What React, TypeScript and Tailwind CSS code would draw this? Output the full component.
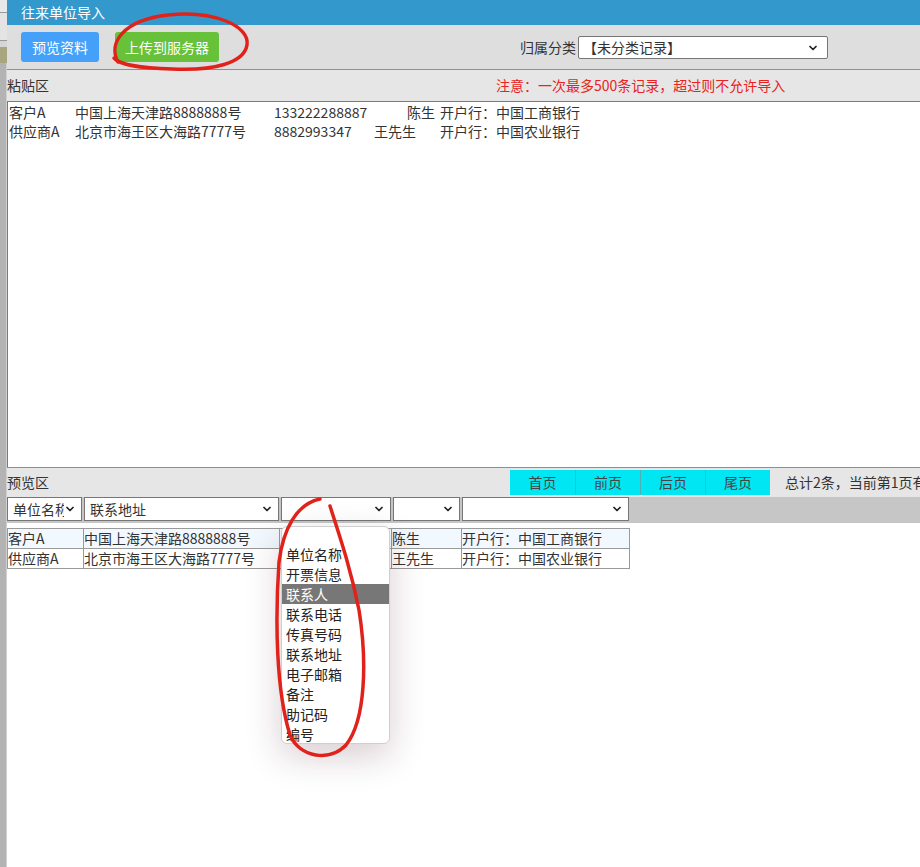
import React from 'react';
import { ChevronDown } from 'lucide-react';

const pasteRows = [
  { name: '客户A', addr: '中国上海天津路8888888号', phone: '133222288887', person: '陈生', personCls: 'w-[66px] pl-[33px]', bank: '开户行：中国工商银行' },
  { name: '供应商A', addr: '北京市海王区大海路7777号', phone: '8882993347', person: '王先生', personCls: 'w-[66px]', bank: '开户行：中国农业银行' },
];

const options = ['单位名称', '开票信息', '联系人', '联系电话', '传真号码', '联系地址', '电子邮箱', '备注', '助记码', '编号'];

function FakeSelect({ w, text }: { w: string; text?: string }) {
  return (
    <div className={`${w} h-[24px] shrink-0 bg-white border border-[#767676] flex items-center justify-between pl-[5px] pr-[5px] overflow-hidden`}>
      <span className="whitespace-nowrap overflow-hidden">{text}</span>
      <ChevronDown className="w-[12px] h-[12px] shrink-0 text-[#222]" strokeWidth={3.5} />
    </div>
  );
}

function App() {
  return (
    <div className="relative h-[867px] w-[920px] overflow-hidden flex bg-white text-[14px] text-[#333] font-['Noto_Sans_CJK_SC','Microsoft_YaHei',sans-serif]">
      {/* background window peeking out on the left */}
      <div className="w-[7px] shrink-0 flex flex-col bg-[#b3b3b3]">
        <div className="h-[13px] bg-[#e9e9e9] border-b border-[#999]" />
        <div className="h-[28px] bg-[#e4e4e4] border-b border-[#999]" />
        <div className="h-[6px] bg-[#d6d6d6]" />
        <div className="h-[16px] bg-[#a9a57f]" />
        <div className="flex-1 bg-[#b3b3b3] border-r border-[#d0d0d0]" />
      </div>

      <div className="flex-1 flex flex-col min-w-0">
        <div className="h-[25px] bg-[#3399cc] text-white flex items-center pl-[14px]">往来单位导入</div>

        <div className="h-[45px] bg-[#dedede] border-b border-[#8f8f8f] flex items-start pt-[7px] pl-[14px]">
          <button className="h-[30px] w-[78px] rounded-[3px] bg-[#45a0fa] text-white">预览资料</button>
          <button className="h-[30px] w-[104px] ml-[16px] rounded-[3px] bg-[#67c23a] text-white">上传到服务器</button>
          <div className="ml-[301px] mt-[4px] flex items-center">
            <span className="mr-[2px]">归属分类</span>
            <div className="w-[250px] h-[23px] bg-white border border-[#767676] rounded-[2px] flex items-center justify-between pl-[4px] pr-[8px]">
              <span>【未分类记录】</span>
              <ChevronDown className="w-[12px] h-[12px] text-[#222]" strokeWidth={3.5} />
            </div>
          </div>
        </div>

        <div className="h-[31px] bg-[#e6e6e6] flex items-center">
          <span>粘贴区</span>
          <span className="ml-[447px] text-[#e8231f]">注意：一次最多500条记录，超过则不允许导入</span>
        </div>

        <div className="h-[366px] bg-white border-t border-[#7a7a7a] border-l border-l-[#7a7a7a] pt-[1px] pl-[1px] leading-[19px]">
          {pasteRows.map((r) => (
            <div key={r.name} className="flex whitespace-nowrap">
              <span className="w-[66px] shrink-0">{r.name}</span>
              <span className="w-[199px] shrink-0">{r.addr}</span>
              <span className="w-[100px] shrink-0">{r.phone}</span>
              <span className={`${r.personCls} shrink-0`}>{r.person}</span>
              <span>{r.bank}</span>
            </div>
          ))}
        </div>

        <div className="h-[30px] bg-[#e6e6e6] border-t border-[#8f8f8f] flex items-center overflow-hidden whitespace-nowrap">
          <span className="shrink-0">预览区</span>
          <div className="ml-[461px] h-[25px] flex shrink-0 bg-[#00e6f2] text-[#444]">
            <div className="w-[65px] flex items-center justify-center">首页</div>
            <div className="w-[65px] flex items-center justify-center border-l border-[#4fb0b8]">前页</div>
            <div className="w-[65px] flex items-center justify-center border-l border-[#4fb0b8]">后页</div>
            <div className="w-[65px] flex items-center justify-center border-l border-[#4fb0b8]">尾页</div>
          </div>
          <span className="ml-[15px] shrink-0">总计2条，当前第1页有2条记录</span>
        </div>

        <div className="h-[26px] bg-[#c6c6c6] flex items-start gap-[2px]">
          <FakeSelect w="w-[75px]" text="单位名称" />
          <FakeSelect w="w-[195px]" text="联系地址" />
          <FakeSelect w="w-[110px]" />
          <FakeSelect w="w-[67px]" />
          <FakeSelect w="w-[167px]" />
        </div>

        <div className="flex-1 bg-white pt-[5px]">
          <table className="border-collapse table-fixed w-[622px] leading-[19px]">
            <colgroup>
              <col className="w-[76px]" />
              <col className="w-[196px]" />
              <col className="w-[112px]" />
              <col className="w-[70px]" />
              <col className="w-[168px]" />
            </colgroup>
            <tbody>
              <tr className="bg-[#f2f8ff]">
                <td className="border border-[#9a9a9a] p-0">客户A</td>
                <td className="border border-[#9a9a9a] p-0">中国上海天津路8888888号</td>
                <td className="border border-[#9a9a9a] p-0 whitespace-nowrap overflow-hidden">133222288887</td>
                <td className="border border-[#9a9a9a] p-0">陈生</td>
                <td className="border border-[#9a9a9a] p-0">开户行：中国工商银行</td>
              </tr>
              <tr className="bg-white">
                <td className="border border-[#9a9a9a] p-0">供应商A</td>
                <td className="border border-[#9a9a9a] p-0">北京市海王区大海路7777号</td>
                <td className="border border-[#9a9a9a] p-0">8882993347</td>
                <td className="border border-[#9a9a9a] p-0">王先生</td>
                <td className="border border-[#9a9a9a] p-0">开户行：中国农业银行</td>
              </tr>
            </tbody>
          </table>
        </div>
      </div>

      {/* open dropdown list */}
      <div className="absolute left-[281px] top-[526px] w-[109px] h-[218px] bg-white rounded-[6px] border border-[#cfcfcf] shadow-[0_12px_36px_rgba(60,0,20,0.2)] overflow-hidden leading-[20px]">
        <div className="h-[17px]" />
        {options.map((o) => (
          <div key={o} className={`h-[20px] pl-[4px] ${o === '联系人' ? 'bg-[#777] text-white' : 'text-[#222]'}`}>{o}</div>
        ))}
      </div>

      {/* red pen marks */}
      <svg className="absolute inset-0 pointer-events-none" width="920" height="867" viewBox="0 0 920 867" fill="none">
        <path
          d="M118 62 C108 44 122 20 168 15 C214 10 250 26 247 45 C244 63 214 71 172 69 C138 68 120 65 114 58"
          stroke="#e0221b"
          strokeWidth="3.5"
          strokeLinecap="round"
        />
        <path
          d="M320 499 C296 504 283 530 279 562 C275 620 276 690 290 735 C300 758 330 762 346 745 C366 720 367 660 359 610 C351 570 341 540 330 506"
          stroke="#e0221b"
          strokeWidth="3.5"
          strokeLinecap="round"
        />
      </svg>
    </div>
  );
}

export default App;
